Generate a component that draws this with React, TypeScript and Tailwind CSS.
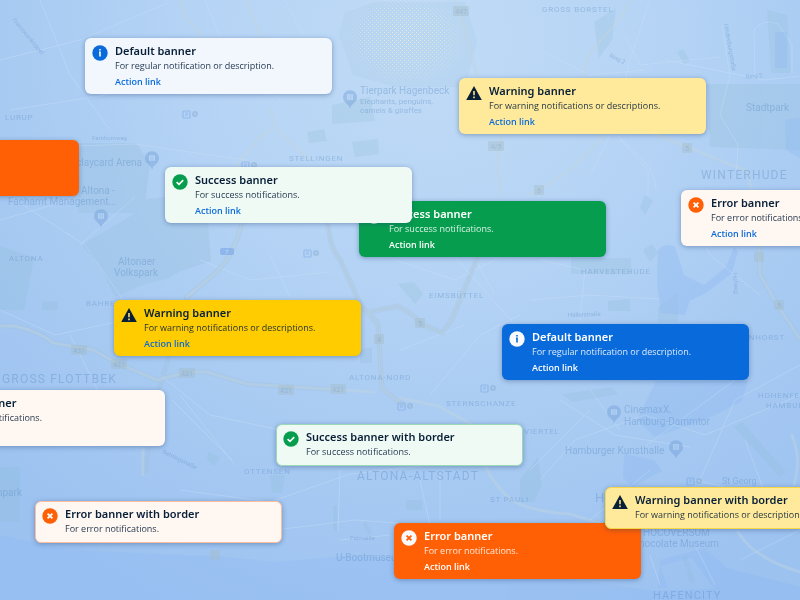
import { clsx } from "clsx";

type Kind = "info" | "success" | "warning" | "error";
type Tone = "light" | "solid";

type BannerItem = {
  kind: Kind;
  tone: Tone;
  title: string;
  text: string;
  action?: boolean;
  place: string;
};

const surfaces: Record<Kind, Record<Tone, string>> = {
  info: { light: "bg-[#f2f7fe]", solid: "bg-[#086adb]" },
  success: { light: "bg-[#f0faf5]", solid: "bg-[#069e4e]" },
  warning: { light: "bg-[#ffea9b]", solid: "bg-[#ffcc00]" },
  error: { light: "bg-[#fff7f2]", solid: "bg-[#ff5f05]" },
};

const outlines: Record<Kind, string> = {
  info: "border-[#086adb]/40",
  success: "border-[#9bd8b6]",
  warning: "border-[#f7d648]",
  error: "border-[#fbbf9f]",
};

const iconColors: Record<Kind, string> = {
  info: "text-[#086adb]",
  success: "text-[#069e4e]",
  warning: "text-[#081f38]",
  error: "text-[#ff5f05]",
};

// Listed from back to front.
const banners: BannerItem[] = [
  { kind: "info", tone: "light", title: "Default banner", text: "For regular notification or description.", action: true, place: "left-[85px] top-[38px]" },
  { kind: "warning", tone: "light", title: "Warning banner", text: "For warning notifications or descriptions.", action: true, place: "left-[459px] top-[78px]" },
  { kind: "error", tone: "solid", title: "Error banner", text: "For error notifications.", action: true, place: "left-[-168px] top-[140px]" },
  { kind: "success", tone: "solid", title: "Success banner", text: "For success notifications.", action: true, place: "left-[359px] top-[201px]" },
  { kind: "success", tone: "light", title: "Success banner", text: "For success notifications.", action: true, place: "left-[165px] top-[167px]" },
  { kind: "error", tone: "light", title: "Error banner", text: "For error notifications.", action: true, place: "left-[681px] top-[190px]" },
  { kind: "warning", tone: "solid", title: "Warning banner", text: "For warning notifications or descriptions.", action: true, place: "left-[114px] top-[300px]" },
  { kind: "info", tone: "solid", title: "Default banner", text: "For regular notification or description.", action: true, place: "left-[502px] top-[324px]" },
  { kind: "error", tone: "light", title: "Error banner", text: "For error notifications.", action: true, place: "left-[-82px] top-[390px]" },
  { kind: "success", tone: "light", title: "Success banner with border", text: "For success notifications.", place: "left-[276px] top-[424px]" },
  { kind: "error", tone: "light", title: "Error banner with border", text: "For error notifications.", place: "left-[35px] top-[501px]" },
  { kind: "error", tone: "solid", title: "Error banner", text: "For error notifications.", action: true, place: "left-[394px] top-[523px]" },
  { kind: "warning", tone: "light", title: "Warning banner with border", text: "For warning notifications or descriptions.", place: "left-[605px] top-[487px]" },
];

function BannerIcon({ kind, tone }: { kind: Kind; tone: Tone }) {
  if (kind === "warning") {
    return (
      <svg viewBox="0 0 16 16" className="size-4 shrink-0" aria-hidden="true">
        <path d="M8 .9 15.8 14.9H.2Z" fill="#081f38" />
        <path d="M8 6v4.2M8 11.4v1.8" stroke="#ffe27a" strokeWidth="1.6" />
      </svg>
    );
  }

  const glyph = tone === "solid" ? "currentColor" : "#ffffff";
  return (
    <svg viewBox="0 0 16 16" className={clsx("size-4 shrink-0", iconColors[kind])} fill="none" aria-hidden="true">
      <circle cx="8" cy="8" r="7.7" fill={tone === "solid" ? "#f8fafc" : "currentColor"} />
      {kind === "info" && <path d="M8 4v1.6M7 7.3h1v4.3" stroke={glyph} strokeWidth="1.6" />}
      {kind === "success" && <path d="m4.6 8.1 2.4 2.3 4.2-4.3" stroke={glyph} strokeWidth="1.6" />}
      {kind === "error" && <path d="m5.6 5.6 4.8 4.8M10.4 5.6l-4.8 4.8" stroke={glyph} strokeWidth="1.8" />}
    </svg>
  );
}

function Banner({ kind, tone, title, text, action, place }: BannerItem) {
  const inverted = tone === "solid" && kind !== "warning";

  return (
    <article
      className={clsx(
        "absolute flex w-[247px] gap-[7px] rounded-md border px-1.5 pt-1.5 pb-1 shadow-[0_1px_5px_rgba(30,60,110,0.4)]",
        surfaces[kind][tone],
        action ? "border-transparent" : outlines[kind],
        place,
      )}
    >
      <BannerIcon kind={kind} tone={tone} />
      <div className={clsx("min-w-0 whitespace-nowrap", inverted ? "text-white" : "text-[#081f38]")}>
        <h2 className="font-['Noto_Sans',sans-serif] text-[11px] leading-3 font-semibold">{title}</h2>
        <p className={clsx("text-[9px] leading-[18px]", inverted ? "text-white/85" : "text-[#081f38]/90")}>{text}</p>
        {action && (
          <a
            href="#"
            className={clsx("block text-[9px] leading-[14px] font-semibold", inverted ? "text-white" : "text-[#086adb]")}
          >
            Action link
          </a>
        )}
      </div>
    </article>
  );
}

type Label = { x: number; y: number; size: number; text: string; caps?: boolean; end?: boolean; rotate?: number };

const labels: Label[] = [
  { x: 5, y: 120, size: 8, text: "LURUP", caps: true },
  { x: 92, y: 140, size: 6, text: "Farnhornweg" },
  { x: 12, y: 20, size: 6, text: "Franzosenkoppel", rotate: 50 },
  { x: 142, y: 166, size: 10, text: "Barclaycard Arena", end: true },
  { x: 81, y: 194, size: 10, text: "Altona -" },
  { x: 8, y: 205, size: 10, text: "Fachamt Management..." },
  { x: 289, y: 161, size: 8, text: "STELLINGEN", caps: true },
  { x: 360, y: 94, size: 10, text: "Tierpark Hagenbeck" },
  { x: 360, y: 104, size: 8, text: "Elephants, penguins," },
  { x: 360, y: 113, size: 8, text: "camels & giraffes" },
  { x: 542, y: 12, size: 8, text: "GROSS BORSTEL", caps: true },
  { x: 609, y: 57, size: 6, text: "Ring 2", rotate: 25 },
  { x: 746, y: 79, size: 6, text: "Ring 2", rotate: -6 },
  { x: 724, y: 24, size: 6, text: "Hindenburgstraße", rotate: 80 },
  { x: 746, y: 111, size: 10, text: "Stadtpark" },
  { x: 701, y: 179, size: 12, text: "WINTERHUDE", caps: true },
  { x: 9, y: 261, size: 8, text: "ALTONA", caps: true },
  { x: 118, y: 265, size: 10, text: "Altonaer" },
  { x: 114, y: 276, size: 10, text: "Volkspark" },
  { x: 86, y: 306, size: 8, text: "BAHRENFELD", caps: true },
  { x: 2, y: 383, size: 12, text: "GROSS FLOTTBEK", caps: true },
  { x: 429, y: 298, size: 8, text: "EIMSBÜTTEL", caps: true },
  { x: 349, y: 380, size: 8, text: "ALTONA-NORD", caps: true },
  { x: 581, y: 274, size: 8, text: "HARVESTEHUDE", caps: true },
  { x: 568, y: 317, size: 6, text: "Hallerstraße", rotate: -2 },
  { x: 733, y: 273, size: 6, text: "Hofweg", rotate: 86 },
  { x: 785, y: 340, size: 8, text: "UHLENHORST", caps: true, end: true },
  { x: 758, y: 398, size: 8, text: "HOHENFELDE", caps: true },
  { x: 766, y: 408, size: 8, text: "HAMBURG", caps: true },
  { x: 446, y: 406, size: 8, text: "STERNSCHANZE", caps: true },
  { x: 524, y: 434, size: 8, text: "VIERTEL", caps: true },
  { x: 357, y: 480, size: 12, text: "ALTONA-ALTSTADT", caps: true },
  { x: 490, y: 502, size: 8, text: "ST PAULI", caps: true },
  { x: 244, y: 474, size: 8, text: "OTTENSEN", caps: true },
  { x: 162, y: 453, size: 6, text: "Behringstraße", rotate: 26 },
  { x: 350, y: 540, size: 6, text: "Palmaille" },
  { x: 336, y: 561, size: 10, text: "U-Bootmuseum" },
  { x: 22, y: 496, size: 10, text: "Jenischpark", end: true },
  { x: 624, y: 413, size: 10, text: "CinemaxX." },
  { x: 624, y: 425, size: 10, text: "Hamburg-Dammtor" },
  { x: 565, y: 454, size: 10, text: "Hamburger Kunsthalle" },
  { x: 722, y: 484, size: 9, text: "St Georg" },
  { x: 595, y: 502, size: 13, text: "H", caps: true },
  { x: 643, y: 536, size: 10, text: "HOCOVERSUM" },
  { x: 719, y: 547, size: 10, text: "Chocolate Museum", end: true },
  { x: 653, y: 599, size: 11, text: "HAFENCITY", caps: true },
];

const shields = [
  [461, 11, "447"], [496, 146, "4/5"], [687, 148, "5"], [539, 190, "6"], [79, 350, "431"], [119, 364, "431"],
  [187, 373, "431"], [286, 390, "431"], [338, 389, "431"], [420, 323, "5"], [379, 339, "4"], [759, 257, ""],
  [779, 305, "5"], [215, 555, ""],
] as const;

const stations = [
  [191, 114], [250, 165], [312, 253], [406, 406], [489, 388], [695, 481],
] as const;

const pins = [
  [152, 159], [101, 217], [350, 98], [614, 413], [676, 448],
] as const;

function CityMap() {
  return (
    <svg
      viewBox="0 0 800 600"
      preserveAspectRatio="xMidYMid slice"
      className="absolute inset-0 size-full font-[Roboto,sans-serif]"
      aria-hidden="true"
    >
      <defs>
        <radialGradient id="sky" gradientUnits="userSpaceOnUse" cx="430" cy="40" r="620">
          <stop offset="0" stopColor="#c0dbf6" />
          <stop offset="0.35" stopColor="#b6d4f5" />
          <stop offset="0.7" stopColor="#a7caf2" />
          <stop offset="1" stopColor="#9cc2f0" />
        </radialGradient>
        <radialGradient id="glow">
          <stop offset="0" stopColor="#fff" />
          <stop offset="0.5" stopColor="#fff" stopOpacity="0.6" />
          <stop offset="1" stopColor="#fff" stopOpacity="0" />
        </radialGradient>
        <pattern id="dots" width="4" height="4" patternUnits="userSpaceOnUse">
          <rect width="1" height="1" fill="#efeed2" />
          <rect x="2" y="2" width="1" height="1" fill="#efeed2" />
        </pattern>
        <mask id="glowMask">
          <ellipse cx="404" cy="38" rx="68" ry="52" fill="url(#glow)" />
        </mask>
      </defs>

      <rect width="800" height="600" fill="url(#sky)" />

      {/* parks */}
      <g fill="#88b9cf" opacity="0.19">
        <path d="M345 12 375 2h90l12 40-12 45h-70l-42-12-14-40Z" opacity="0.5" />
        <path d="M80 143h56l14 20-6 50H78ZM82 245l50-30 8-15 25-3 42 12 4 52-30 10-14 8-22 5-30 13-15-30Z" />
        <path d="M707 84h93v66l-90-3ZM767 10l20 5 4 58h-20ZM332 105l38-8 5 24-43 3Z" />
        <path d="M0 246l34 12-10 52H0ZM42 302l16-1v9H42ZM0 467h20v55H0Z" />
        <path d="M307 132l17-3 3 12-18 2ZM352 142l26-3 1 15-24 3ZM677 52l6-3 7 12-6 3ZM594 22l22-14-4 32-13 18ZM645 195l8 6-8 14-5-7Z" />
        <path d="M571 258h60v16h-60ZM608 301l22-2v12h-22ZM643 250l9-6 6 9-8 9ZM398 284l16-2 9 12-8 10ZM360 350l12-3v16h-12Z" />
        <path d="M208 452l12 5-6 9-7-6ZM270 475h15l-3 18h-10ZM333 505h4v26h-4ZM406 500h16v10h-16ZM366 521l6 12-4 2-5-11ZM682 556l5 0 8 25-5 3Z" />
        <path d="M520 480l18-23 4 28-8 17h-14ZM562 394l50-7 6 7-45 8ZM734 427l8-5 44 50-6 5ZM658 307l20-15v30h-20Z" />
      </g>

      {/* water */}
      <g fill="#8fb9f3" opacity="0.35">
        <path d="M0 535l65 14 90 5 60 2 60 6 70-6 90 3 90 14 130 18 135-5v20H0Z" />
        <path d="M658 250q8-8 17-3l9 28 20 10 22-18 8-20 4 4-6 22-26 20-16 8-5 14-24-2-4-30Z" />
        <path d="M656 381h92l-6 20-35 18-52 18-18-17Z" />
        <path d="M624 454l30 6 8 11-30 16-9-10ZM785 120l15-2v40l-14-8ZM775 32h12v36h-12Z" />
        <path d="M660 560l45-12 22 20 73 19v13h-70l-18-14-20-28-32 8 8 22h-10Z" />
      </g>

      {/* streets */}
      <g fill="none" stroke="#d3e6fb" strokeWidth="1" opacity="0.32">
        <path d="M40 0l30 75 40 55M0 60l80-20 90-38M10 110l90-14 70-16M75 146l60-2 110 16M0 190l85 55 45 65M0 220l70-20M80 245l55-48" />
        <path d="M285 0l18 35M205 0l25 60 50 40M540 50l50 25 55-5M530 110l70 10 60 16M625 35l15 30 80-8M722 25l8 50-10 40 18 30-2 35" />
        <path d="M755 80l-1-50q8-12 24-6l14 20v30M650 0l-20 60-20 75-20 40M665 60l100 20 35-4M618 136l30 35v25M620 140q35 24 36 50" />
        <path d="M530 300l60-5 70 4M540 260l45 10-5 50M690 215l20 40 50 40M420 200l45 40 30 55M395 260l60 20 80-40M440 240l75 85" />
        <path d="M200 260l50 20 80-8M270 255l20 42M0 310l55 25 70-15M70 335l30 60M160 375l50 40 70 15M180 395l55 70M172 400l60 60" />
        <path d="M180 490l90 12 80-28 90-10M275 530l80-10 110 8M340 470l-2 60M420 480l10 45M440 470v50M540 480l35-40 70-25 60 20 95-40" />
        <path d="M560 400l55 35 75 12M640 450l95-70M700 480l35-80 65-35M650 470l-60 50M530 470l60-60M745 440l30 80M695 480l100 24" />
        <path d="M340 540l50-5M560 350l90 30M430 395l50-60 40-20M400 350l65-25M590 390l30 40M650 555l10 30M695 545l20 40M740 560l60-30" />
      </g>

      {/* main roads */}
      <g fill="none" strokeLinecap="round" strokeLinejoin="round">
        <g stroke="#a0bfdc" strokeWidth="5" opacity="0.3">
          <path d="M243 217q-8 40-30 58l-26 22-32 105-10 70" />
          <path d="M328 224q2 25 12 35l20 45 18 20 4 65 20 15" />
          <path d="M370 312l28-6q18 10 22 17l22 10 10-14 25-60" />
          <path d="M0 326h15q25 6 38 17l40 7 26 14 38 16 30-8h20l40 12 80 5" />
          <path d="M759 235l1 40 20 34 20 30" />
        </g>
        <g stroke="#c2d5df" strokeWidth="3" opacity="0.42">
          <path d="M180 0l6 18 16 17M246 0l14 35M270 110l7 20 33 30M237 165l20-25 13-10M455 0l10 30 12 45M502 134l-5 30 4 30" />
          <path d="M629 2q-8 18-30 40-16 16-14 33M655 134l30 12 62 25 5 20M530 195l40-25 35-35M243 217q-8 40-30 58l-26 22" />
          <path d="M328 224q2 25 12 35l20 45 18 20 4 65 20 15M370 312l28-6q18 10 22 17l22 10 10-14 25-60M475 257l5-10" />
          <path d="M0 326h15q25 6 38 17l40 7 26 14 38 16 30-8h20l40 12 80 5 47 3" />
          <path d="M400 398l38 8 33 18M485 466q12 24 30 36 20 10 55 12l35 11M738 532q15 26 62 40M792 435q10 25 2 50M759 246l1 29 20 34 20 30M143 450v25" />
        </g>
        <path
          d="M328 224q2 25 12 35l20 45 18 20 4 65 20 15M370 312l28-6q18 10 22 17l22 10 10-14 25-60"
          stroke="#a9c4e1"
          opacity="0.6"
        />
      </g>

      {shields.map(([x, y, number]) => (
        <g key={`${x}-${y}`} opacity="0.4">
          <rect x={x - (number.length > 1 ? 8 : 5)} y={y - 5} width={number.length > 1 ? 16 : 10} height="10" rx="1" fill="#a4bcc4" />
          <text x={x} y={y + 3} textAnchor="middle" fontSize="7" fill="#6c92bb">{number}</text>
        </g>
      ))}
      <g opacity="0.5">
        <rect x="220" y="248" width="14" height="7" rx="2" fill="#6e9eea" />
        <text x="227" y="254" textAnchor="middle" fontSize="6" fill="#d4e5fa">7</text>
      </g>

      {stations.map(([x, y]) => (
        <g key={`${x}-${y}`} opacity="0.35">
          <rect x={x - 8} y={y - 3} width="7" height="7" rx="1" fill="none" stroke="#5d91e0" strokeWidth="1.2" />
          <path d={`M${x - 6} ${y + 1}h3M${x - 6} ${y - 1}h3`} stroke="#5d91e0" />
          <circle cx={x + 4} cy={y} r="3" fill="#7a9fc5" />
          <path d={`m${x + 3} ${y - 1} 2 2`} stroke="#c6def6" />
        </g>
      ))}

      {pins.map(([x, y]) => (
        <g key={`${x}-${y}`} opacity="0.4">
          <path d={`M${x} ${y + 11}q-1-4-4-6a7 7 0 1 1 8 0q-3 2-4 6Z`} fill="#6c9ad4" />
          <rect x={x - 3} y={y - 4} width="6" height="6" rx="1" fill="#b7d4f5" />
          <path d={`M${x - 1} ${y - 4}v6M${x + 1} ${y - 4}v6`} stroke="#7fa8dc" strokeWidth="0.7" />
        </g>
      ))}

      <g fill="#5f8fc6" opacity="0.4">
        {labels.map(({ x, y, size, text, caps, end, rotate }) => (
          <text
            key={`${text}-${x}-${y}`}
            x={x}
            y={y}
            fontSize={size}
            textAnchor={end ? "end" : "start"}
            transform={rotate ? `rotate(${rotate} ${x} ${y})` : undefined}
            className={caps ? "tracking-widest" : undefined}
          >
            {text}
          </text>
        ))}
      </g>

      <rect x="330" width="150" height="95" fill="url(#dots)" mask="url(#glowMask)" />
    </svg>
  );
}

export default function App() {
  return (
    <main className="relative h-screen w-full overflow-hidden bg-[#abcdf3] font-['Open_Sans',sans-serif]">
      <CityMap />
      {banners.map((banner) => (
        <Banner key={banner.place} {...banner} />
      ))}
    </main>
  );
}
